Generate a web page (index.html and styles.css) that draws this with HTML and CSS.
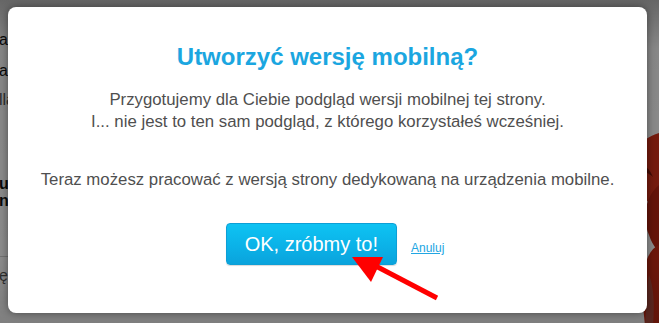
FILE: index.html
```html
<!DOCTYPE html>
<html lang="pl">
<head>
<meta charset="utf-8">
<title>Utworzyć wersję mobilną?</title>
<link rel="stylesheet" href="styles.css">
</head>
<body>
<div class="page">
  <div class="page-text">
    <p class="bg-line l1">al</p>
    <p class="bg-line l2">al</p>
    <p class="bg-line l3 muted">lla</p>
    <p class="bg-line l4 strong">uj</p>
    <p class="bg-line l5 strong">n</p>
    <div class="bg-rule"></div>
    <p class="bg-line l6 muted">ę</p>
  </div>
  <svg class="deco" width="40" height="200" viewBox="0 0 40 200" aria-hidden="true">
    <path d="M40 8 C20 14 8 30 14 52 C20 74 38 80 40 96 Z" fill="#d8321a"/>
    <path d="M40 60 C28 70 22 90 30 110 C34 122 40 126 40 130 Z" fill="#b82412"/>
    <path d="M40 120 C26 126 20 150 26 200 L40 200 Z" fill="#c42a14"/>
    <path d="M30 150 C34 160 36 175 34 200 L26 200 C28 180 27 165 30 150 Z" fill="#8a8a8a" opacity="0.35"/>
    <path d="M14 40 C22 36 30 42 34 52 C30 48 22 44 14 46 Z" fill="#7a1408"/>
  </svg>
</div>
<div class="overlay"></div>
<div class="modal" role="dialog">
  <h1 class="modal-title">Utworzyć wersję mobilną?</h1>
  <p class="modal-lead">Przygotujemy dla Ciebie podgląd wersji mobilnej tej strony.<br>I... nie jest to ten sam podgląd, z którego korzystałeś wcześniej.</p>
  <p class="modal-note">Teraz możesz pracować z wersją strony dedykowaną na urządzenia mobilne.</p>
  <div class="modal-actions">
    <button class="btn-ok" type="button">OK, zróbmy to!</button>
    <a class="link-cancel" href="#">Anuluj</a>
  </div>
</div>
<svg class="arrow" width="110" height="60" viewBox="0 0 110 60" aria-hidden="true">
  <line x1="30" y1="13" x2="97" y2="48" stroke="#ff0000" stroke-width="5" stroke-linecap="butt"/>
  <polygon points="12,7 43,7 31,32" fill="#ff0000"/>
</svg>
</body>
</html>
```
FILE: styles.css
```css
html, body {
  margin: 0;
  padding: 0;
}
body {
  width: 659px;
  height: 323px;
  overflow: hidden;
  position: relative;
  font-family: "Liberation Sans", Arial, sans-serif;
  background: #ffffff;
}
.page {
  position: relative;
  height: 323px;
}
.page-text {
  display: flex;
  flex-direction: column;
  padding-top: 30px;
  margin-left: -1px;
}
.bg-line {
  margin: 0;
  font-size: 16px;
  line-height: 20px;
  color: #111;
  white-space: nowrap;
}
.bg-line.muted { color: #555; }
.bg-line.strong { font-weight: bold; }
.l2 { margin-top: 11px; }
.l3 { margin-top: 9px; }
.l4 { margin-top: 64px; }
.l5 { margin-top: -3px; }
.bg-rule {
  margin-top: 45px;
  height: 1px;
  width: 40px;
  background: #cfcfcf;
}
.l6 { margin-top: 9px; }
.deco {
  position: absolute;
  right: 0;
  top: 125px;
}
.overlay {
  position: absolute;
  inset: 0;
  background: linear-gradient(to bottom, rgba(0,0,0,0.6) 0, rgba(0,0,0,0.47) 15%, rgba(0,0,0,0.45) 80%, rgba(0,0,0,0.5) 100%);
}
.modal {
  position: absolute;
  left: 8px;
  top: 7px;
  width: 639px;
  height: 306px;
  box-sizing: border-box;
  background: #ffffff;
  border-radius: 8px;
  box-shadow: 0 0 8px rgba(0, 0, 0, 0.45);
  padding-top: 36px;
  text-align: center;
}
.modal-title {
  margin: 0;
  font-size: 24px;
  line-height: 28px;
  font-weight: bold;
  color: #1ba6e0;
}
.modal-lead {
  margin: 18px 0 0;
  font-size: 16.8px;
  line-height: 21.5px;
  color: #4f4f4f;
}
.modal-note {
  margin: 37px 0 0;
  font-size: 16.8px;
  line-height: 22px;
  color: #4f4f4f;
}
.modal-actions {
  margin-top: 32px;
  padding-left: 15px;
  display: flex;
  justify-content: center;
  align-items: center;
  gap: 14px;
}
.btn-ok {
  height: 42px;
  box-sizing: border-box;
  padding: 0 18px;
  border: 1px solid #0d9fd6;
  border-radius: 4px;
  background: linear-gradient(to bottom, #0ec3f3 0%, #0bb2e8 55%, #0aa3dc 100%);
  box-shadow: 0 1px 1px rgba(0, 0, 0, 0.15);
  color: #ffffff;
  font-family: "Liberation Sans", Arial, sans-serif;
  font-size: 20px;
  line-height: 40px;
}
.link-cancel {
  margin-top: 8px;
  font-size: 12px;
  line-height: 14px;
  color: #22a6e2;
  text-decoration: underline;
}
.arrow {
  position: absolute;
  left: 340px;
  top: 250px;
}
```
